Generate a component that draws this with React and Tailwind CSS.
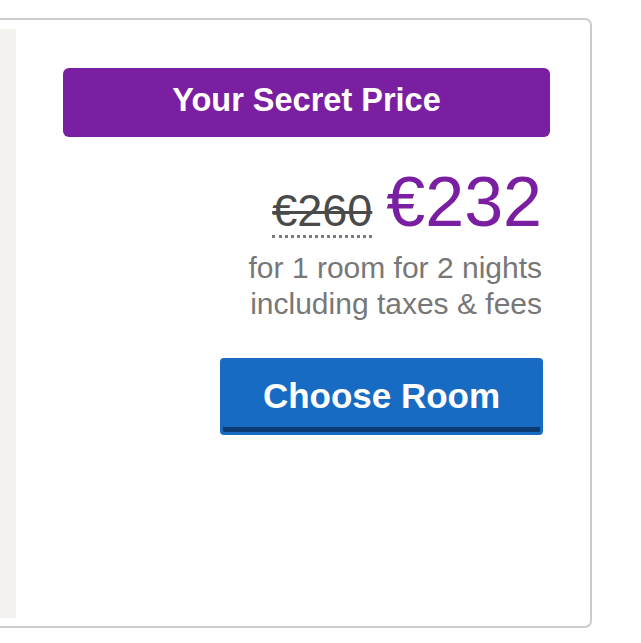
import React from "react";

const font = { fontFamily: '"Liberation Sans", Arial, sans-serif' };

function PriceCard() {
  return (
    <div className="ml-[-20px] mt-[18px] w-[612px] h-[610px] border-2 border-[#cccccc] rounded-[7px] bg-white flex">
      {/* left strip (previous column) */}
      <div className="w-[34px] mt-[9px] mb-[8px] bg-[#f3f2ee]" />

      {/* price column */}
      <div className="flex-1 pl-[47px] pr-[40px] pt-[48px] flex flex-col">
        <div className="h-[69px] rounded-md bg-[#7b1fa2] flex items-center justify-center pb-[5px]">
          <span className="text-white font-bold text-[32.5px] leading-none">Your Secret Price</span>
        </div>

        <div className="mt-[30px] pr-[8px] flex flex-col items-end">
          <div className="flex items-baseline gap-[14px]">
            <span className="text-[45px] leading-none text-[#4a4a4a] line-through decoration-[3px] border-b-[3px] border-dotted border-[#7a7a7a] pb-[2px]">
              €260
            </span>
            <span className="text-[70px] leading-none text-[#7b1fa2]">€232</span>
          </div>
          <p className="mt-[12px] text-right text-[30px] leading-[36px] text-[#777777]">
            for 1 room for 2 nights
            <br />
            including taxes &amp; fees
          </p>
        </div>

        <div className="mt-[36px] flex justify-end pr-[7px]">
          <button className="w-[323px] h-[77px] rounded-[4px] border-[3px] border-[#186bc3] bg-[#186bc3] shadow-[inset_0_-5px_0_#0c3b72] pb-[3px] flex items-center justify-center text-white font-bold text-[35px] leading-none">
            Choose Room
          </button>
        </div>
      </div>
    </div>
  );
}

export default function App() {
  return (
    <div className="w-[641px] h-[643px] bg-white overflow-hidden" style={font}>
      <PriceCard />
    </div>
  );
}
